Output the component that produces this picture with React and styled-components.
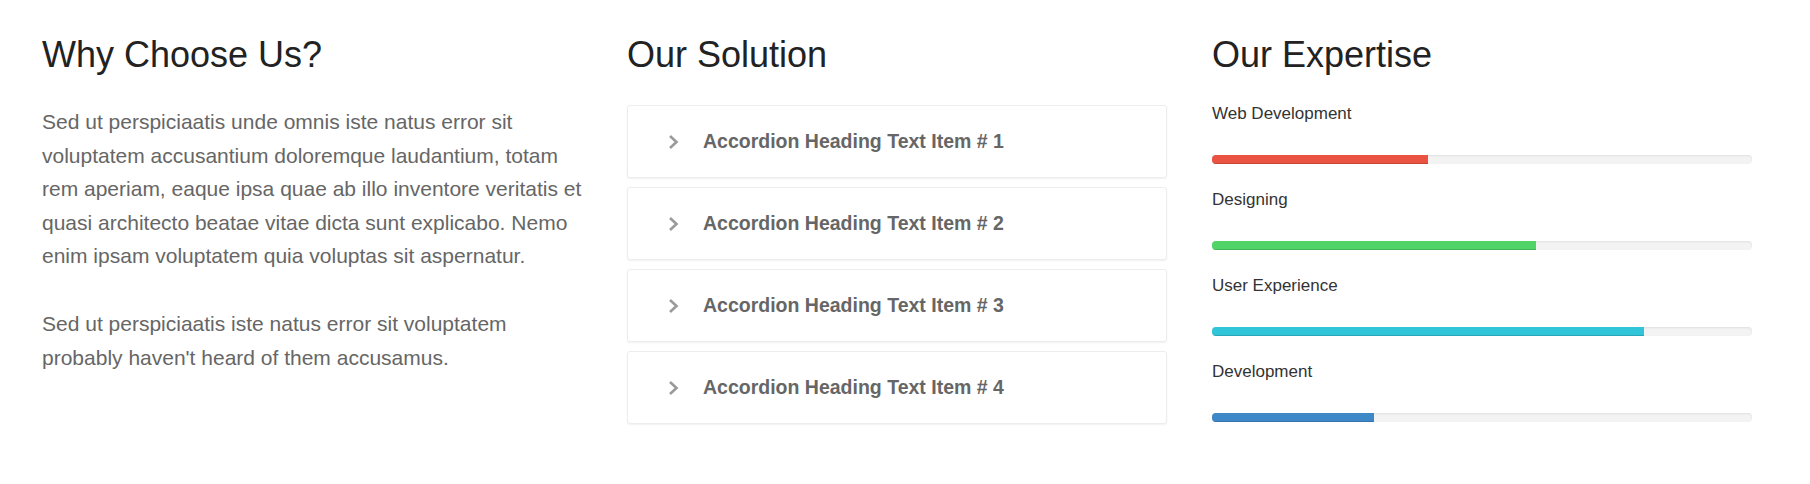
import React from 'react'
import styled, { createGlobalStyle } from 'styled-components'

const GlobalStyle = createGlobalStyle`
  html, body {
    margin: 0;
    padding: 0;
    background: #fff;
  }
  body {
    font-family: "Liberation Sans", Arial, sans-serif;
  }
`

const Section = styled.section`
  display: grid;
  grid-template-columns: repeat(3, 540px);
  column-gap: 45px;
  padding: 35px 0 40px 42px;
`

const Column = styled.div`
  display: flex;
  flex-direction: column;
`

const Title = styled.h2`
  margin: 0 0 30px;
  font-size: 36px;
  line-height: 40px;
  font-weight: 400;
  color: #222;
`

const Text = styled.p`
  margin: 0 0 34px;
  font-size: 21px;
  line-height: 33.6px;
  color: #666;
`

const Accordion = styled.div`
  display: flex;
  flex-direction: column;
  gap: 9px;
`

const Panel = styled.div`
  height: 71px;
  display: flex;
  align-items: center;
  border: 1px solid #ededed;
  border-radius: 3px;
  background: #fff;
  box-shadow: 0 1px 2px rgba(0, 0, 0, 0.06);
  padding-left: 40px;
`

const Chevron = styled.svg`
  width: 11px;
  height: 16px;
  flex: none;
  margin-right: 24px;
`

const PanelTitle = styled.span`
  font-size: 19.5px;
  font-weight: 700;
  color: #666;
`

const Skills = styled.div`
  display: flex;
  flex-direction: column;
  margin-top: -3px;
`

const Skill = styled.div`
  margin-bottom: 24px;
`

const Label = styled.div`
  font-size: 17px;
  line-height: 24px;
  color: #333;
  margin-bottom: 29px;
`

const Track = styled.div`
  height: 9px;
  border-radius: 4px;
  background: #f3f3f3;
  box-shadow: inset 0 1px 2px rgba(0, 0, 0, 0.08);
  overflow: hidden;
`

const Fill = styled.div`
  height: 100%;
  background: ${p => p.$color};
  box-shadow: inset 0 -1px 0 rgba(0, 0, 0, 0.15);
`

const items = [1, 2, 3, 4]

const skills = [
  { name: 'Web Development', value: 40, color: '#ea5242' },
  { name: 'Designing', value: 60, color: '#50d468' },
  { name: 'User Experience', value: 80, color: '#31c5da' },
  { name: 'Development', value: 30, color: '#3f88c8' },
]

export default function App() {
  return (
    <>
      <GlobalStyle />
      <Section>
        <Column>
          <Title>Why Choose Us?</Title>
          <Text>
            Sed ut perspiciaatis unde omnis iste natus error sit voluptatem accusantium
            doloremque laudantium, totam rem aperiam, eaque ipsa quae ab illo inventore
            veritatis et quasi architecto beatae vitae dicta sunt explicabo. Nemo enim
            ipsam voluptatem quia voluptas sit aspernatur.
          </Text>
          <Text>
            Sed ut perspiciaatis iste natus error sit voluptatem probably haven't heard of
            them accusamus.
          </Text>
        </Column>

        <Column>
          <Title>Our Solution</Title>
          <Accordion>
            {items.map(n => (
              <Panel key={n}>
                <Chevron viewBox="0 0 11 16">
                  <path d="M2 2 L8.5 8 L2 14" fill="none" stroke="#9a9a9a" strokeWidth="2.6" />
                </Chevron>
                <PanelTitle>Accordion Heading Text Item # {n}</PanelTitle>
              </Panel>
            ))}
          </Accordion>
        </Column>

        <Column>
          <Title>Our Expertise</Title>
          <Skills>
            {skills.map(s => (
              <Skill key={s.name}>
                <Label>{s.name}</Label>
                <Track>
                  <Fill $color={s.color} style={{ width: `${s.value}%` }} />
                </Track>
              </Skill>
            ))}
          </Skills>
        </Column>
      </Section>
    </>
  )
}
